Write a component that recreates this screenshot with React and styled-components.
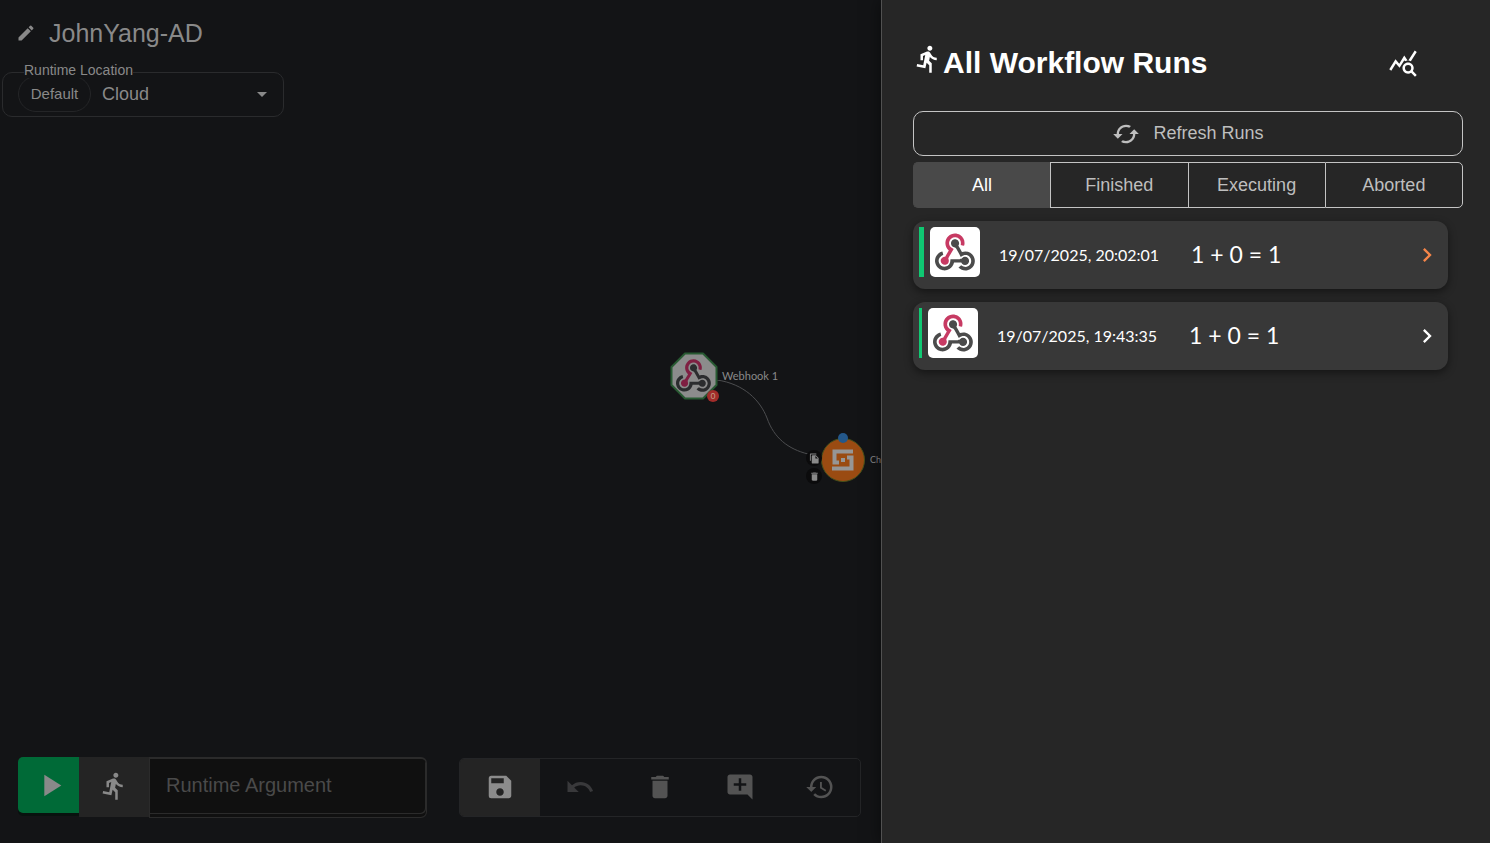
import React from 'react';
import styled, { createGlobalStyle } from 'styled-components';
import {
  MdEdit, MdDirectionsRun, MdPlayArrow, MdSave, MdUndo, MdDelete, MdAddComment,
  MdRestore, MdQueryStats, MdCached, MdChevronRight, MdArrowDropDown, MdFileCopy,
} from 'react-icons/md';

const GlobalStyle = createGlobalStyle`
  *, *::before, *::after { box-sizing: border-box; }
  body { margin: 0; background: #131416; font-family: "Liberation Sans", Arial, sans-serif; }
  button, input, select { font-family: inherit; margin: 0; }
  svg { display: block; flex: none; }
`;

const Page = styled.div`
  display: flex;
  min-height: 100vh;
`;

/* ---------- workspace ---------- */

const Workspace = styled.main`
  position: relative;
  flex: 1;
  min-width: 0;
  display: flex;
  flex-direction: column;
  overflow: hidden;
  background: #131416;
  color: #898989;
`;

const TitleRow = styled.header`
  display: flex;
  align-items: center;
  gap: 13px;
  height: 66px;
  padding: 0 16px;
`;

const WorkflowName = styled.h1`
  margin: 0;
  font-size: 25px;
  line-height: 30px;
  font-weight: 400;
`;

const IconButton = styled.button`
  display: flex;
  align-items: center;
  justify-content: center;
  padding: 0;
  border: 0;
  background: none;
  color: inherit;
`;

const LocationField = styled.div`
  position: relative;
  display: flex;
  align-items: center;
  gap: 11px;
  width: 282px;
  height: 45px;
  margin: 6px 0 0 2px;
  padding: 0 9px 2px 15px;
  border: 1px solid #2a2b2d;
  border-radius: 10px;
`;

const LocationLabel = styled.label`
  position: absolute;
  top: -11px;
  left: 21px;
  background: #131416;
  font-size: 14px;
  line-height: 16px;
`;

const DefaultChip = styled.span`
  display: flex;
  align-items: center;
  justify-content: center;
  width: 73px;
  height: 36px;
  flex: none;
  border: 1px solid #242527;
  border-radius: 18px;
  font-size: 15px;
`;

const LocationSelect = styled.select`
  flex: 1;
  min-width: 0;
  height: 36px;
  padding: 0;
  appearance: none;
  border: 0;
  background: none;
  color: inherit;
  font-size: 18px;
`;

const Canvas = styled.section`
  flex: 1;
`;

const Edge = styled.svg`
  position: absolute;
  top: 380px;
  left: 716px;
`;

const Node = styled.div`
  position: absolute;
  top: ${(p) => p.$y}px;
  left: ${(p) => p.$x}px;
  display: flex;
  align-items: center;
  gap: ${(p) => p.$gap}px;
  white-space: nowrap;
`;

const NodeLabel = styled.span`
  padding-bottom: 1px;
  font-family: Lato, sans-serif;
  font-size: ${(p) => p.$size}px;
  line-height: 16px;
`;

const ErrorBadge = styled.span`
  position: absolute;
  top: 38px;
  left: 37px;
  width: 12px;
  height: 12px;
  border-radius: 50%;
  background: #a12c2a;
  color: #c49c86;
  font-size: 9px;
  line-height: 12px;
  text-align: center;
`;

const StatusDot = styled.span`
  position: absolute;
  top: -5px;
  left: 17px;
  width: 10px;
  height: 10px;
  border-radius: 50%;
  background: #24588a;
`;

const NodeActions = styled.div`
  position: absolute;
  top: 450px;
  left: 806px;
  display: flex;
  flex-direction: column;
  gap: 2px;
`;

const NodeAction = styled(IconButton)`
  width: 16px;
  height: 16px;
  border-radius: 50%;
  background: #0b0b0c;
`;

const BottomBar = styled.footer`
  display: flex;
  align-items: center;
  gap: 32px;
  padding: 0 20px 25px 18px;
`;

const RunGroup = styled.form`
  display: flex;
  width: 409px;
  height: 61px;
`;

const PlayButton = styled(IconButton)`
  width: 61px;
  height: 56px;
  padding-left: 3px;
  border-radius: 5px 0 0 5px;
  background: #006a37;
  box-shadow: 0 3px 0 #08120e;
`;

const RunsButton = styled(IconButton)`
  width: 70px;
  height: 60px;
  padding-bottom: 2px;
  background: #242424;
`;

const ArgumentInput = styled.input`
  flex: 1;
  min-width: 0;
  padding: 0 16px 6px;
  border: 1px solid #2b2b2b;
  border-top-width: 2px;
  border-radius: 0 6px 6px 0;
  background: #101010;
  box-shadow: inset 0 -3px 0 #101010, inset -1px -4px 0 #2b2b2b;
  color: #898989;
  font-size: 20px;
  &::placeholder { color: #4a4a4a; opacity: 1; }
`;

const Toolbar = styled.div`
  display: flex;
  flex: 1;
  height: 59px;
  overflow: hidden;
  border: 1px solid #242527;
  border-radius: 5px;
`;

const ToolButton = styled(IconButton)`
  flex: 1;
  padding-bottom: 2px;
  background: ${(p) => (p.$active ? '#242424' : 'transparent')};
  color: ${(p) => p.$color};
`;

/* ---------- drawer ---------- */

const Drawer = styled.aside`
  flex: 0 0 609px;
  padding: 44px 27px 32px 31px;
  border-left: 1px solid #515151;
  background: #262626;
  box-shadow: 0 0 16px rgba(0, 0, 0, 0.5);
  color: #fff;
  z-index: 1;
`;

const DrawerHeader = styled.header`
  display: flex;
  justify-content: space-between;
  padding-right: 45px;
`;

const DrawerTitle = styled.h2`
  display: flex;
  margin: 0;
  font-size: 30px;
  line-height: 37px;
  font-weight: 700;
`;

const RefreshButton = styled.button`
  display: flex;
  align-items: center;
  justify-content: center;
  gap: 13px;
  width: 100%;
  height: 45px;
  margin-top: 30px;
  padding: 0;
  border: 1px solid #c4c4c4;
  border-radius: 10px;
  background: none;
  color: #bebebe;
  font-size: 18px;
`;

const Tabs = styled.div`
  display: flex;
  height: 46px;
  margin-top: 6px;
`;

const Tab = styled.button`
  flex: 1;
  padding: 0;
  border: 1px solid ${(p) => (p.$active ? '#494949' : '#c4c4c4')};
  border-right-width: 0;
  background: ${(p) => (p.$active ? '#494949' : 'transparent')};
  color: ${(p) => (p.$active ? '#fff' : '#bebebe')};
  font-size: 18px;
  &:first-child { border-radius: 5px 0 0 5px; }
  &:last-child { border-right-width: 1px; border-radius: 0 5px 5px 0; }
`;

const RunList = styled.ul`
  display: flex;
  flex-direction: column;
  gap: 13px;
  margin: 13px 15px 0 0;
  padding: 0;
  list-style: none;
`;

const RunCard = styled.li`
  display: flex;
  align-items: flex-start;
  height: 68px;
  padding: 6px 9px 0 6px;
  border-radius: 12px;
  background: #383838;
  box-shadow: 0 3px 8px rgba(0, 0, 0, 0.45);
`;

const RunStatus = styled.span`
  width: ${(p) => (p.$selected ? 5 : 3)}px;
  height: 50px;
  margin-right: 6px;
  background: #0fc872;
`;

const RunLogo = styled.span`
  display: flex;
  align-items: center;
  justify-content: center;
  width: 50px;
  height: 50px;
  border-radius: 5px;
  background: #fff;
`;

const RunText = styled.div`
  display: flex;
  align-items: center;
  flex: 1;
  height: 54px;
  padding-left: 19px;
  font-family: Lato, sans-serif;
`;

const RunTime = styled.time`
  width: 192px;
  font-size: 16px;
`;

const RunResult = styled.span`
  font-size: 23px;
`;

const OpenRun = styled(IconButton)`
  width: 24px;
  height: 56px;
  color: ${(p) => (p.$selected ? '#f58549' : '#fff')};
`;

function WebhookLogo({ size, pink = '#c73a63', gray = '#4b4b4b' }) {
  return (
    <svg width={size} height={size} viewBox="0 0 256 239" aria-hidden="true">
      <path fill={pink} d="M119.54 100.5c-10.61 17.84-20.78 35.11-31.15 52.25-2.67 4.4-3.99 7.99-1.86 13.58 5.88 15.46-2.41 30.5-18 34.58-14.7 3.85-29.01-5.81-31.93-21.54-2.58-13.93 8.23-27.58 23.58-29.76 1.29-.18 2.6-.21 4.76-.37l23.36-39.17C73.61 95.47 64.87 78.39 66.8 57.23c1.37-14.96 7.25-27.88 18-38.48 20.59-20.29 52-23.57 76.25-8 23.28 14.96 33.95 44.09 24.86 69.03-6.86-1.86-13.76-3.73-21.35-5.79 2.86-13.86.75-26.31-8.6-36.98-6.18-7.04-14.11-10.73-23.12-12.09-18.07-2.73-35.82 8.88-41.08 26.62-5.98 20.13 3.06 36.57 27.78 48.96z" />
      <path fill={gray} d="M149.84 79.41c7.48 13.19 15.07 26.57 22.59 39.84 38.02-11.77 66.68 9.28 76.97 31.81 12.42 27.22 3.93 59.46-20.47 76.25-25.04 17.24-56.7 14.29-78.89-7.85 5.65-4.73 11.34-9.49 17.41-14.56 21.91 14.19 41.07 13.52 55.3-3.29 12.13-14.33 11.87-35.71-.61-49.75-14.41-16.19-33.71-16.69-57.04-1.14-9.67-17.17-19.52-34.2-28.89-51.49-3.16-5.83-6.65-9.21-13.77-10.44-11.89-2.06-19.57-12.28-20.03-23.72-.45-11.32 6.21-21.55 16.63-25.53 10.32-3.95 22.44-.76 29.38 8.01 5.67 7.17 7.48 15.24 4.49 24.09-.83 2.46-1.91 4.85-3.07 7.77z" />
      <path fill={gray} d="M167.71 187.21h-45.77c-4.39 18.04-13.87 32.61-30.19 41.88-12.7 7.2-26.38 9.64-40.94 7.29C24 232.05 2.09 207.92.16 180.75c-2.19-30.79 18.97-58.15 47.17-64.3 1.95 7.07 3.92 14.21 5.87 21.27-25.88 13.2-34.84 29.83-27.59 50.63 6.37 18.31 24.48 28.34 44.14 24.46 20.08-3.96 30.21-20.65 28.97-47.43 19.04 0 38.09-.2 57.13.09 7.43.12 13.17-.65 18.77-7.2 9.22-10.79 26.19-9.81 36.12.37 10.15 10.41 9.66 27.16-1.08 37.13-10.36 9.62-26.73 9.1-36.42-1.26-2-2.14-3.57-4.68-5.53-7.3z" />
    </svg>
  );
}

function WebhookNode() {
  return (
    <svg width="48" height="48" viewBox="0 0 48 48" aria-hidden="true">
      <path d="M15 1.500h18L46.500 15v18L33 46.500H15L1.500 33V15z" fill="#8c8c8c" stroke="#285a32" strokeWidth="2" strokeLinejoin="round" />
      <svg x="6" y="6" width="35" height="35"><WebhookLogo size={35} pink="#7f1f42" gray="#2b2c2e" /></svg>
    </svg>
  );
}

function ToolsNode() {
  return (
    <svg width="44" height="44" viewBox="0 0 44 44" aria-hidden="true">
      <circle cx="22" cy="22" r="21.500" fill="#9a4b12" stroke="#46501b" />
      <g fill="none" stroke="#969696" strokeWidth="4">
        <path d="M32 13.500H13.500V24.500H18" />
        <path d="M11 30.500H30.500V19.500H26" />
      </g>
      <path d="M20 20h4v4h-4z" fill="#969696" />
    </svg>
  );
}

const tools = [
  { label: 'Save', Icon: MdSave, color: '#8c8c8c', active: true },
  { label: 'Undo', Icon: MdUndo, color: '#39393b' },
  { label: 'Delete', Icon: MdDelete, color: '#535353' },
  { label: 'Add comment', Icon: MdAddComment, color: '#535353' },
  { label: 'History', Icon: MdRestore, color: '#535353' },
];

const filters = ['All', 'Finished', 'Executing', 'Aborted'];

const runs = [
  { time: '19/07/2025, 20:02:01', result: '1 + 0 = 1', selected: true },
  { time: '19/07/2025, 19:43:35', result: '1 + 0 = 1', selected: false },
];

export default function App() {
  return (
    <Page>
      <GlobalStyle />
      <Workspace>
        <TitleRow>
          <IconButton aria-label="Rename workflow"><MdEdit size={20} /></IconButton>
          <WorkflowName>JohnYang-AD</WorkflowName>
        </TitleRow>
        <LocationField>
          <LocationLabel htmlFor="location">Runtime Location</LocationLabel>
          <DefaultChip>Default</DefaultChip>
          <LocationSelect id="location" defaultValue="cloud">
            <option value="cloud">Cloud</option>
          </LocationSelect>
          <MdArrowDropDown size={24} />
        </LocationField>

        <Canvas aria-label="Workflow canvas">
          <Edge width="100" height="80" fill="none" stroke="#4c4d4f" aria-hidden="true">
            <path d="M1 0C28 4 44 20 51 38C58 58 72 69 92 74" />
          </Edge>
          <Node $x={670} $y={352} $gap={4}>
            <WebhookNode />
            <NodeLabel $size={11}>Webhook 1</NodeLabel>
            <ErrorBadge>0</ErrorBadge>
          </Node>
          <Node $x={821} $y={438} $gap={5}>
            <ToolsNode />
            <NodeLabel $size={9}>Ch</NodeLabel>
            <StatusDot />
          </Node>
          <NodeActions>
            <NodeAction aria-label="Copy node"><MdFileCopy size={11} /></NodeAction>
            <NodeAction aria-label="Delete node"><MdDelete size={11} /></NodeAction>
          </NodeActions>
        </Canvas>

        <BottomBar>
          <RunGroup onSubmit={(e) => e.preventDefault()}>
            <PlayButton type="submit" aria-label="Run workflow"><MdPlayArrow size={37} /></PlayButton>
            <RunsButton type="button" aria-label="Show runs"><MdDirectionsRun size={30} /></RunsButton>
            <ArgumentInput aria-label="Runtime Argument" placeholder="Runtime Argument" />
          </RunGroup>
          <Toolbar role="toolbar">
            {tools.map(({ label, Icon, color, active }) => (
              <ToolButton key={label} aria-label={label} $color={color} $active={active}>
                <Icon size={30} />
              </ToolButton>
            ))}
          </Toolbar>
        </BottomBar>
      </Workspace>

      <Drawer>
        <DrawerHeader>
          <DrawerTitle><MdDirectionsRun size={30} />All Workflow Runs</DrawerTitle>
          <IconButton aria-label="Explore runs"><MdQueryStats size={30} /></IconButton>
        </DrawerHeader>
        <RefreshButton><MdCached size={28} />Refresh Runs</RefreshButton>
        <Tabs role="tablist">
          {filters.map((name, i) => (
            <Tab key={name} role="tab" aria-selected={i === 0} $active={i === 0}>{name}</Tab>
          ))}
        </Tabs>
        <RunList>
          {runs.map((run) => (
            <RunCard key={run.time}>
              <RunStatus $selected={run.selected} />
              <RunLogo><WebhookLogo size={40} /></RunLogo>
              <RunText>
                <RunTime>{run.time}</RunTime>
                <RunResult>{run.result}</RunResult>
              </RunText>
              <OpenRun aria-label="Open run" $selected={run.selected}><MdChevronRight size={28} /></OpenRun>
            </RunCard>
          ))}
        </RunList>
      </Drawer>
    </Page>
  );
}
